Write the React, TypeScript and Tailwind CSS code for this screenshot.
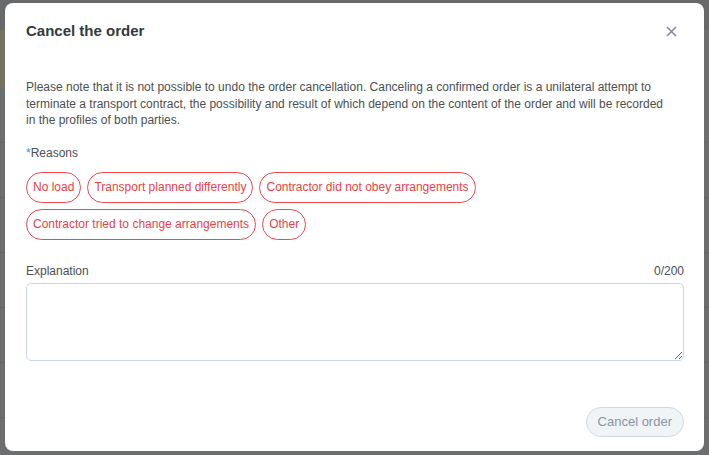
import { useState } from "react";

const REASONS = [
  "No load",
  "Transport planned differently",
  "Contractor did not obey arrangements",
  "Contractor tried to change arrangements",
  "Other",
];

export default function App() {
  const [picked, setPicked] = useState<string[]>([]);
  const [text, setText] = useState("");

  const toggle = (r: string): void =>
    setPicked((prev) => (prev.includes(r) ? prev.filter((x) => x !== r) : [...prev, r]));

  return (
    <div
      className="relative w-[709px] h-[455px] overflow-hidden bg-[#6d6e70]"
      style={{ fontFamily: "Tahoma, 'Liberation Sans', Arial, sans-serif" }}
    >
      {/* dimmed page behind the dialog */}
      <div className="absolute inset-0 flex flex-col">
        <div className="h-[30px] bg-[#68696b]" />
        <div className="h-[58px] w-[20px] bg-[#75725f]" />
        {[0, 1, 2, 3, 4, 5].map((i) => (
          <div key={i} className="h-[55px] border-b border-[#636466]" />
        ))}
      </div>

      <div className="relative pt-[3px] pl-[5px]">
        <div
          role="dialog"
          aria-modal="true"
          aria-label="Cancel the order"
          className="w-[699px] h-[448px] bg-white rounded-[8px] flex flex-col pl-[21px] pr-[20px]"
        >
          <div className="flex items-center justify-between h-[56px] pt-[1px]">
            <h2 className="text-[15px] font-bold text-[#333a40]">Cancel the order</h2>
            <button
              type="button"
              aria-label="Close"
              className="mr-[3px] text-[#7d8ca6] flex items-center justify-center w-[20px] h-[20px]"
            >
              <svg width="11" height="11" viewBox="0 0 11 11" fill="none">
                <path d="M1 1L10 10M10 1L1 10" stroke="currentColor" strokeWidth="1.6" />
              </svg>
            </button>
          </div>

          <p className="mt-[20px] pr-[20px] text-[12px] leading-[16.5px] text-[#4b4f54]">
            Please note that it is not possible to undo the order cancellation. Canceling a confirmed
            order is a unilateral attempt to terminate a transport contract, the possibility and result
            of which depend on the content of the order and will be recorded in the profiles of both
            parties.
          </p>

          <div className="mt-[16px] text-[12px] leading-[16px] text-[#4b4f54]">
            <span className="text-[#3d8fe0]">*</span>Reasons
          </div>

          <div className="mt-[11px] flex flex-wrap gap-[6px] w-[470px]">
            {REASONS.map((r) => (
              <button
                key={r}
                type="button"
                onClick={() => toggle(r)}
                className={`h-[31px] px-[6px] rounded-full border text-[12px] border-[#f0474d] ${
                  picked.includes(r) ? "bg-[#f0474d] text-white" : "bg-white text-[#ef4046]"
                }`}
              >
                {r}
              </button>
            ))}
          </div>

          <div className="mt-[23px] flex items-center justify-between text-[12px] leading-[16px] text-[#4b4f54]">
            <span>Explanation</span>
            <span>{text.length}/200</span>
          </div>
          <textarea
            value={text}
            maxLength={200}
            onChange={(e) => setText(e.target.value)}
            className="mt-[4px] h-[78px] w-full rounded-[5px] border border-[#c9d6e3] px-2 py-1 text-[12px] outline-none focus:border-[#3d8fe0]"
          />

          <div className="flex-1 flex items-end justify-end pb-[14px]">
            <button
              type="button"
              disabled={picked.length === 0}
              className="h-[30px] px-[11px] rounded-full border border-[#cfdae5] bg-[#f1f4f7] text-[13px] text-[#8894a1]"
            >
              Cancel order
            </button>
          </div>
        </div>
      </div>
    </div>
  );
}
